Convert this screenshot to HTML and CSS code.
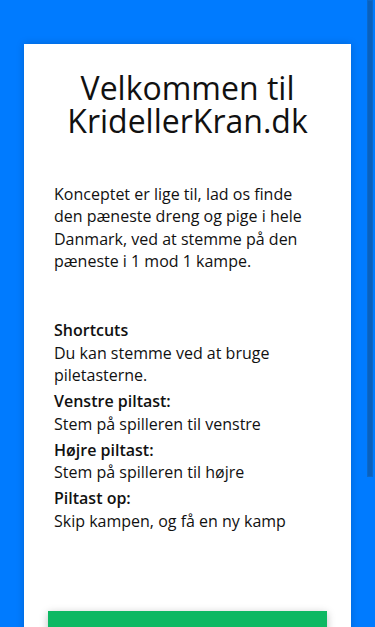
FILE: index.html
```html
<!DOCTYPE html>
<html lang="da">
<head>
<meta charset="utf-8">
<meta name="viewport" content="width=device-width, initial-scale=1">
<title>KridellerKran.dk</title>
<link rel="stylesheet" href="styles.css">
</head>
<body>
  <main class="card">
    <h1 class="title">Velkommen til KridellerKran.dk</h1>
    <div class="text">
      <p class="intro">Konceptet er lige til, lad os finde den pæneste dreng og pige i hele Danmark, ved at stemme på den pæneste i 1 mod 1 kampe.</p>
      <div class="shortcuts">
        <div class="group first">
          <h3 class="label">Shortcuts</h3>
          <p class="desc">Du kan stemme ved at bruge piletasterne.</p>
        </div>
        <div class="group">
          <h3 class="label">Venstre piltast:</h3>
          <p class="desc">Stem på spilleren til venstre</p>
        </div>
        <div class="group">
          <h3 class="label">Højre piltast:</h3>
          <p class="desc">Stem på spilleren til højre</p>
        </div>
        <div class="group">
          <h3 class="label">Piltast op:</h3>
          <p class="desc">Skip kampen, og få en ny kamp</p>
        </div>
      </div>
    </div>
    <button class="start" type="button" aria-label="Start"></button>
  </main>
  <div class="scroll-thumb"></div>
</body>
</html>
```
FILE: styles.css
```css
html, body {
  height: 100%;
  overflow: hidden;
}
body {
  margin: 0;
  background: #007bff;
  padding: 44px 24px 0;
  font-family: "Open Sans", "DejaVu Sans", sans-serif;
  color: #111;
  box-sizing: border-box;
}
.card {
  background: #fff;
  padding: 27px 24px 40px;
  box-shadow: 0 0 8px rgba(0, 0, 0, 0.18);
}
.title {
  margin: 0;
  text-align: center;
  font-size: 32px;
  font-weight: 400;
  line-height: 33px;
  padding: 0 6px;
}
.text {
  padding: 0 6px;
  font-size: 16px;
  line-height: 22.4px;
}
.intro {
  margin: 46px 0 0;
}
.shortcuts {
  margin-top: 46px;
}
.group {
  margin-top: 3.6px;
}
.group.first {
  margin-top: 0;
}
.label {
  margin: 0;
  font-size: 16px;
  font-weight: 600;
  line-height: 22.4px;
}
.group.first .label {
  line-height: 23.3px;
}
.desc {
  margin: 0;
}
.start {
  display: block;
  width: 100%;
  height: 52px;
  margin-top: 79px;
  border: 0;
  background: #0db863;
  box-shadow: 0 2px 8px rgba(0, 0, 0, 0.25);
}
.scroll-thumb {
  position: fixed;
  top: 0;
  right: 2px;
  width: 6px;
  height: 477px;
  background: #0a61bd;
  box-shadow: inset 0 0 0 1px #0c68c8;
}
```
